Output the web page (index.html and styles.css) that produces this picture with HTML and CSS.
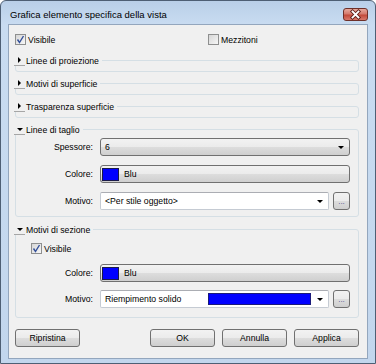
FILE: index.html
```html
<!DOCTYPE html>
<html>
<head>
    <title>Grafica elemento specifica della vista</title>
    <meta name="viewport" content="width=device-width, initial-scale=1.0">
    <link rel="stylesheet" href="styles.css">
</head>
<body>
    <div class="window">
        <div class="titlebar">
            <span class="title">Grafica elemento specifica della vista</span>
            <span class="close">
                <svg width="25" height="13" viewBox="0 0 25 13">
                    <path d="M9.5 3.5 L15.5 9.5 M15.5 3.5 L9.5 9.5" stroke="#5a1f18" stroke-width="3.6" stroke-linecap="square"/>
                    <path d="M9.5 3.5 L15.5 9.5 M15.5 3.5 L9.5 9.5" stroke="#ffffff" stroke-width="1.8" stroke-linecap="square"/>
                </svg>
            </span>
        </div>

        <div class="client">
            <div class="top-row">
                <label class="check visibile"><span class="box"><svg width="9" height="9" viewBox="0 0 9 9"><path d="M1.5 4.5 L3.5 7.5 L7.5 1" fill="none" stroke="#33509a" stroke-width="1.4"/></svg></span>Visibile</label>
                <label class="check"><span class="box"></span>Mezzitoni</label>
            </div>

            <div class="group collapsed">
                <div class="group-head"><span class="expander"><span class="tri-right"></span></span>Linee di proiezione</div>
            </div>

            <div class="group collapsed">
                <div class="group-head"><span class="expander"><span class="tri-right"></span></span>Motivi di superficie</div>
            </div>

            <div class="group collapsed">
                <div class="group-head"><span class="expander"><span class="tri-right"></span></span>Trasparenza superficie</div>
            </div>

            <div class="group cut">
                <div class="group-head"><span class="expander"><span class="tri-down"></span></span>Linee di taglio</div>
                <div class="row first">
                    <span class="label">Spessore:</span>
                    <div class="field button-like">6<span class="arrow"></span></div>
                </div>
                <div class="row">
                    <span class="label">Colore:</span>
                    <div class="field button-like"><span class="swatch"></span>Blu</div>
                </div>
                <div class="row">
                    <span class="label">Motivo:</span>
                    <div class="field combo">&lt;Per stile oggetto&gt;<span class="arrow"></span></div>
                    <span class="more">...</span>
                </div>
            </div>

            <div class="group section">
                <div class="group-head"><span class="expander"><span class="tri-down"></span></span>Motivi di sezione</div>
                <div class="check-row">
                    <label class="check"><span class="box"><svg width="9" height="9" viewBox="0 0 9 9"><path d="M1.5 4.5 L3.5 7.5 L7.5 1" fill="none" stroke="#33509a" stroke-width="1.4"/></svg></span>Visibile</label>
                </div>
                <div class="row colore">
                    <span class="label">Colore:</span>
                    <div class="field button-like"><span class="swatch"></span>Blu</div>
                </div>
                <div class="row motivo">
                    <span class="label">Motivo:</span>
                    <div class="field combo"><span class="fill-name">Riempimento solido</span><span class="fill-bar"></span><span class="arrow"></span></div>
                    <span class="more">...</span>
                </div>
            </div>

            <div class="footer">
                <button class="btn">Ripristina</button>
                <div class="footer-right">
                    <button class="btn">OK</button>
                    <button class="btn">Annulla</button>
                    <button class="btn">Applica</button>
                </div>
            </div>
        </div>
    </div>
</body>
</html>
```

FILE: styles.css
```css
* {
    box-sizing: border-box;
}

body {
    margin: 0;
    background-color: #ffffff;
    font-family: 'Liberation Sans', Arial, sans-serif;
    white-space: nowrap;
}

.window {
    width: 376px;
    height: 364px;
    border: 1px solid #4e5f74;
    border-radius: 6px 6px 0 0;
    background: linear-gradient(#b9cfe8, #c9dcf1 24px, #c2d6ed);
    padding: 0 7px 4px 7px;
    display: flex;
    flex-direction: column;
}

.titlebar {
    height: 24px;
    display: flex;
    justify-content: space-between;
    align-items: flex-start;
}

.title {
    margin-top: 8px;
    padding-left: 2px;
    font-size: 9.5px;
    color: #000;
}

.close {
    margin-top: 7px;
    width: 25px;
    height: 13px;
    border: 1px solid #6e3029;
    border-radius: 3px;
    background: linear-gradient(#e8a99c, #d47a6c 45%, #c24a3a 55%, #d8786a);
    display: flex;
}

.close svg {
    margin: -1px;
}

.client {
    flex: 1;
    background-color: #f0f0f0;
    border: 1px solid #93a6bd;
    padding: 9px 8px 11px 6px;
    font-size: 8.7px;
    color: #000;
}

.top-row {
    display: flex;
    height: 11px;
}

.check {
    display: flex;
    align-items: center;
    gap: 2px;
    height: 11px;
}

.check.visibile {
    width: 193px;
}

.box {
    width: 11px;
    height: 11px;
    border: 1px solid #8e8f8f;
    background: linear-gradient(135deg, #d6d6d6, #f7f7f7);
    display: flex;
    align-items: center;
    justify-content: center;
}

.group {
    border: 1px solid #d5dfe5;
    border-radius: 3px;
    margin-bottom: 11px;
}

.group.collapsed {
    height: 12px;
}

.top-row + .group {
    margin-top: 15px;
}

.group.cut {
    height: 88px;
    margin-bottom: 12px;
}

.group.section {
    height: 89px;
}

.group-head {
    display: flex;
    align-items: center;
    height: 11px;
    margin-top: -6px;
    margin-left: -2px;
    padding-right: 3px;
    width: fit-content;
    background-color: #f0f0f0;
}

.expander {
    width: 11px;
    height: 11px;
    border-bottom: 1px solid #a6a6a6;
    display: flex;
    align-items: center;
    justify-content: center;
    margin-right: 1px;
}

.tri-right {
    width: 0;
    height: 0;
    border-left: 3px solid #000;
    border-top: 3px solid transparent;
    border-bottom: 3px solid transparent;
}

.tri-down {
    width: 0;
    height: 0;
    border-top: 3px solid #000;
    border-left: 3px solid transparent;
    border-right: 3px solid transparent;
}

.row {
    display: flex;
    align-items: center;
    height: 18px;
    margin-top: 9px;
    padding-right: 8px;
}

.row.first {
    margin-top: 3px;
}

.label {
    width: 77px;
    text-align: right;
    margin-right: 7px;
}

.field {
    flex: 1;
    min-width: 0;
    height: 18px;
    display: flex;
    align-items: center;
    padding-left: 4px;
    border-radius: 3px;
}

.button-like {
    border: 1px solid #707070;
    background: linear-gradient(#f2f2f2, #ebebeb 50%, #dddddd 50%, #cfcfcf);
}

.combo {
    border: 1px solid #c5cbd3;
    border-top-color: #abadb3;
    border-radius: 2px;
    background-color: #ffffff;
    margin-right: 4px;
}

.arrow {
    flex-shrink: 0;
    margin-left: auto;
    margin-right: 5px;
    width: 0;
    height: 0;
    border-top: 3px solid #000;
    border-left: 3px solid transparent;
    border-right: 3px solid transparent;
}

.swatch {
    width: 17px;
    height: 13px;
    background-color: #0000ff;
    border: 1px solid #1a1a4a;
    margin-left: -3px;
    margin-right: 5px;
}

.more {
    flex-shrink: 0;
    width: 17px;
    height: 18px;
    border: 1px solid #707070;
    border-radius: 3px;
    background: linear-gradient(#f2f2f2, #ebebeb 50%, #dddddd 50%, #cfcfcf);
    display: flex;
    align-items: flex-end;
    justify-content: center;
    padding-bottom: 3px;
    font-size: 8px;
    line-height: 1;
    color: #4a4a8a;
}

.check-row {
    margin-top: 8px;
    padding-left: 15px;
}

.row.colore {
    margin-top: 10px;
}

.row.motivo {
    margin-top: 8px;
}

.fill-name {
    width: 103px;
    flex-shrink: 0;
}

.fill-bar {
    flex-shrink: 0;
    width: 103px;
    height: 12px;
    background-color: #0000ff;
    border: 1px solid #1a1a7a;
}

.footer {
    display: flex;
    justify-content: space-between;
    margin-top: 11px;
}

.footer-right {
    display: flex;
    gap: 7px;
}

.btn {
    width: 65px;
    height: 18px;
    border: 1px solid #707070;
    border-radius: 3px;
    background: linear-gradient(#f2f2f2, #ebebeb 50%, #dddddd 50%, #cfcfcf);
    font-family: 'Liberation Sans', Arial, sans-serif;
    font-size: 8.7px;
    color: #000;
    padding: 0;
}
```
